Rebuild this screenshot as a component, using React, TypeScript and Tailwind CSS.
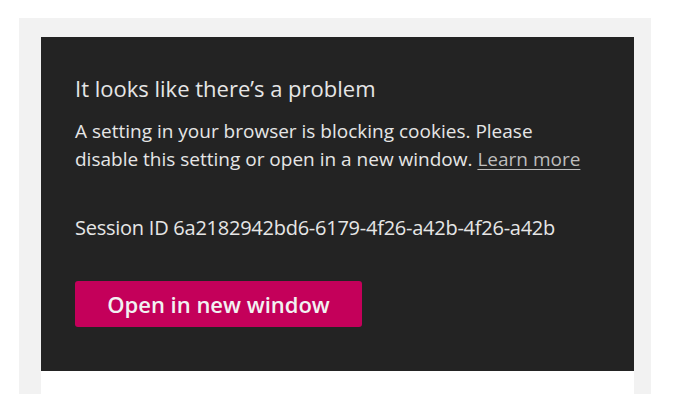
export default function App() {
  return (
    <div className="h-[409px] w-[675px] bg-white pl-[19px] pt-[18px] font-['Open_Sans',sans-serif]">
      <div className="h-[376px] w-[632px] bg-[#f2f2f2] pl-[22px] pt-[19px]">
        <div className="w-[593px]">
          <div className="h-[334px] bg-[#232323] pl-[34px] pt-[36px] text-[#e6e6e6]">
            <h1 className="text-[22px] leading-[30px]">It looks like there’s a problem</h1>
            <p className="mt-[14px] w-[515px] text-[19px] leading-[28px]">
              A setting in your browser is blocking cookies. Please disable this setting or open in a new window.{" "}
              <a href="#" className="text-[#bdbdbd] underline underline-offset-[3px]">
                Learn more
              </a>
            </p>
            <p className="mt-[41px] text-[20px] leading-[28px] tracking-[-0.25px]">
              Session ID 6a2182942bd6-6179-4f26-a42b-4f26-a42b
            </p>
            <button className="mt-[39px] h-[46px] w-[287px] rounded-[3px] bg-[#c4005a] text-[22px] font-semibold text-[#f2f2f2]">
              Open in new window
            </button>
          </div>
          <div className="h-[23px] bg-white" />
        </div>
      </div>
    </div>
  );
}
